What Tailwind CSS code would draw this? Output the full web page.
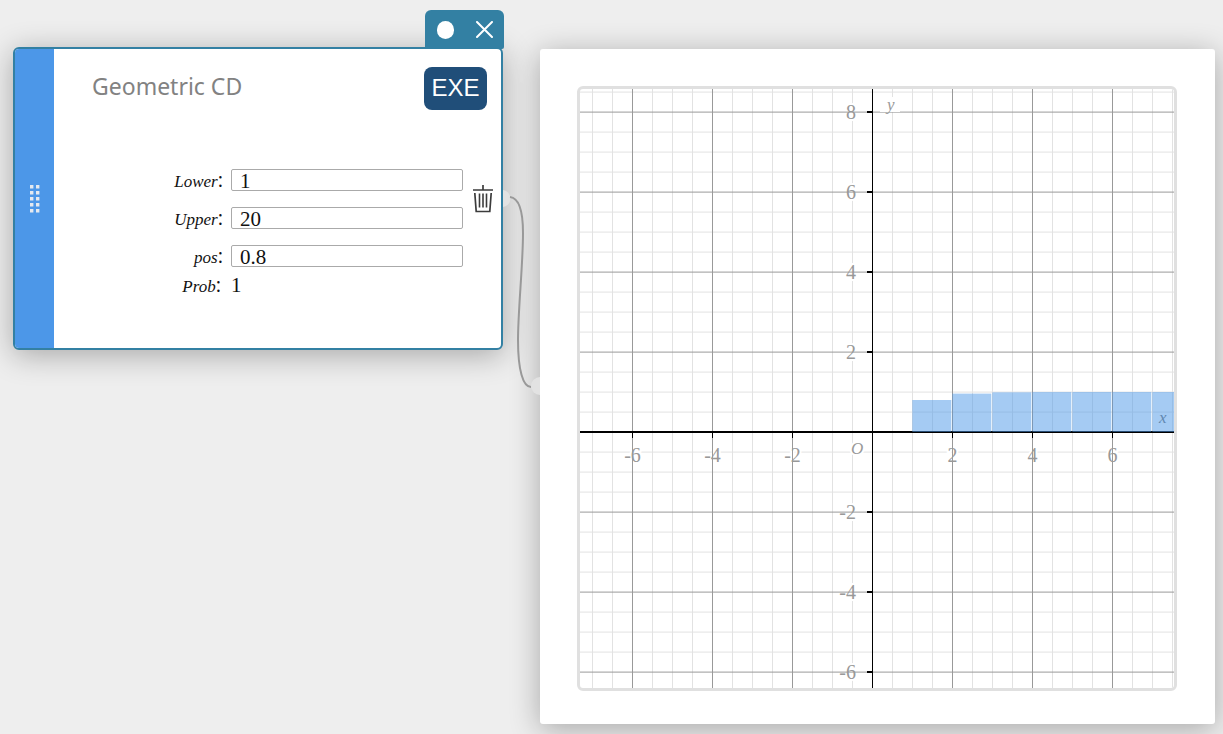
<!DOCTYPE html>
<html lang="en">
<head>
<meta charset="utf-8">
<title>Geometric CD</title>
<script src="https://cdn.jsdelivr.net/npm/@tailwindcss/browser@4"></script>
</head>
<body class="bg-[#eeeeee]">
<main class="relative flex min-h-screen items-start gap-[37px] overflow-hidden pt-[47px] pr-2 pb-[10px] pl-[13px]">

  <section class="relative flex w-[490px] shrink-0 rounded-md border-2 border-[#3380a3] bg-white shadow-[0_5px_30px_rgba(0,0,0,0.3)]">
    <div class="flex w-[39px] shrink-0 items-center justify-center rounded-l-sm bg-[#4c97e8]">
      <svg class="h-7 w-[10px]" viewBox="0 0 10 28" fill="#e4e9ef" aria-hidden="true">
        <path d="M0 0h3.400v3.400H0zM6 0h3.400v3.400H6zM0 6h3.400v3.400H0zM6 6h3.400v3.400H6zM0 12h3.400v3.400H0zM6 12h3.400v3.400H6zM0 18h3.400v3.400H0zM6 18h3.400v3.400H6zM0 24h3.400v3.400H0zM6 24h3.400v3.400H6z"/>
      </svg>
    </div>
    <div class="flex-1 pt-[18px] pb-[43px]">
      <header class="flex items-start justify-between pr-[14px] pl-[38px]">
        <h1 class="font-['Noto_Sans'] text-[23px] leading-[38px] text-[#828282]">Geometric CD</h1>
        <button type="button" class="h-[43px] w-[63px] rounded-lg bg-[#204e79] pb-[2px] font-['Liberation_Sans'] text-2xl text-white">EXE</button>
      </header>
      <div class="mt-[59px] flex items-start pr-2">
        <form class="grid flex-1 auto-rows-[22px] grid-cols-[169px_1fr] gap-x-2 gap-y-4 font-['Liberation_Serif'] text-[21px] leading-[22px] text-[#111111]">
          <label for="lower" class="text-right"><i class="text-[17px]">Lower</i><span class="font-['Open_Sans'] text-xl leading-5">:</span></label>
          <input id="lower" value="1" class="h-[22px] w-full rounded-xs border border-[#aaaaaa] pt-px pl-2">
          <label for="upper" class="text-right"><i class="text-[17px]">Upper</i><span class="font-['Open_Sans'] text-xl leading-5">:</span></label>
          <input id="upper" value="20" class="h-[22px] w-full rounded-xs border border-[#aaaaaa] pt-px pl-2">
          <label for="pos" class="text-right"><i class="text-[17px]">pos</i><span class="font-['Open_Sans'] text-xl leading-5">:</span></label>
          <input id="pos" value="0.8" class="h-[22px] w-full rounded-xs border border-[#aaaaaa] pt-px pl-2">
          <label for="prob" class="-mt-[9px] pr-[2px] text-right"><i class="text-[17px]">Prob</i><span class="font-['Open_Sans'] text-xl leading-5">:</span></label>
          <output id="prob" class="-mt-[9px]">1</output>
        </form>
        <button type="button" aria-label="Delete" class="mt-4 ml-[10px]">
          <svg class="h-7 w-5" viewBox="0 0 20 28" fill="none" stroke="#3c3c3c" aria-hidden="true">
            <path stroke-width="1.700" d="M0 5h20M10 0V5M1.800 8l1.400 18.500h13.600L18.200 8"/>
            <path stroke-width="1.600" d="M6.500 8.500V22.500M10 8.500V22.500M13.500 8.500V22.500"/>
          </svg>
        </button>
      </div>
    </div>
    <div class="absolute -top-[39px] -right-[3px] flex h-[39px] w-[79px] items-center justify-between rounded-md rounded-b-xs bg-[#3380a3] pr-[11px] pl-3">
      <button type="button" aria-label="Toggle" class="h-[18px] w-[17px] rounded-full bg-white"></button>
      <button type="button" aria-label="Close">
        <svg class="h-[17px] w-[17px]" viewBox="0 0 17 17" stroke="#fff" stroke-width="2" stroke-linecap="round" aria-hidden="true"><path d="M1 1l15 15M16 1L1 16"/></svg>
      </button>
    </div>
  </section>

  <svg class="absolute top-[185px] left-[503px] h-[215px] w-[37px]" viewBox="0 0 37 215" aria-hidden="true">
    <circle cx="-1" cy="13.500" r="8.500" fill="#e2e2e2"/>
    <circle cx="37" cy="201" r="9" fill="#e2e2e2"/>
    <path d="M7 12C16 13 20 27 20 48C20 80 15 125 15 155C15 185 20 202 28 202" fill="none" stroke="#999" stroke-width="2"/>
  </svg>

  <section class="mt-[2px] flex-1 rounded-[3px] bg-white pt-[37px] pr-[38px] pb-[33px] pl-[37px] shadow-[0_5px_30px_rgba(0,0,0,0.3)]">
    <div class="overflow-hidden rounded-md border-3 border-[#e0e0e0]">
      <svg id="plot" class="block w-full" viewBox="580 89 594 599" role="img" aria-label="Cumulative distribution plot"></svg>
    </div>
  </section>
</main>
<script>
const left = 580, right = 1174, top_ = 89, bottom = 688, ox = 872, oy = 432, unit = 40;
let minor = '', major = '', ticks = '', text = '', bars = '';
for (let k = -14; k <= 15; k++) {
  const d = `M${ox + 20 * k + 0.5} ${top_}V${bottom}`;
  if (k % 4) minor += d; else if (k) major += d;
}
for (let k = -17; k <= 12; k++) {
  const d = `M${left} ${oy + 20 * k + 0.1}H${right}`;
  if (k % 4) minor += d; else if (k) major += d;
}
for (let n = -6; n <= 8; n += 2) {
  if (!n) continue;
  text += `<text x="856" y="${oy - n * unit + 7}" text-anchor="end">${n}</text>`;
  ticks += `M867 ${oy - n * unit}H872`;
  if (n < 8) {
    text += `<text x="${ox + n * unit + 0.5}" y="462" text-anchor="middle">${n}</text>`;
  }
}
let xticks = '';
for (let n = -6; n <= 6; n += 2) if (n) xticks += `M${ox + n * unit + 0.5} 432V438`;
text += '<text x="851" y="454" font-size="17" font-style="italic">O</text><text x="887" y="110" font-size="17" font-style="italic">y</text>';
for (let n = 1; n <= 7; n++) {
  const h = unit * (1 - Math.pow(0.2, n));
  bars += `<rect x="${ox + n * unit + 0.3}" y="${oy - h}" width="39" height="${h}"/>`;
}
document.getElementById('plot').innerHTML = `
<path d="${minor}" stroke="#e2e2e2"/>
<rect x="880" y="97" width="20" height="15" fill="#fff"/>
<g font-family="Liberation Serif" font-size="20" fill="#fff" stroke="#fff" stroke-width="4">${text}</g>
<path d="${major}" stroke="#999"/>
<rect x="880" y="104" width="20" height="8" fill="#fff"/>
<g font-family="Liberation Serif" font-size="20" fill="#999">${text}<text x="1159" y="423" font-size="17" font-style="italic" fill="#777">x</text></g>
<path d="M872.5 ${top_}V${bottom}" stroke="#000"/>
<path d="M${left} 432H${right}" stroke="#000" stroke-width="2"/>
<path d="${ticks}" stroke="#000" stroke-width="2"/>
<path d="${xticks}" stroke="#000"/>
<g fill="#4c97e8" fill-opacity="0.5">${bars}</g>`;
</script>
</body>
</html>
